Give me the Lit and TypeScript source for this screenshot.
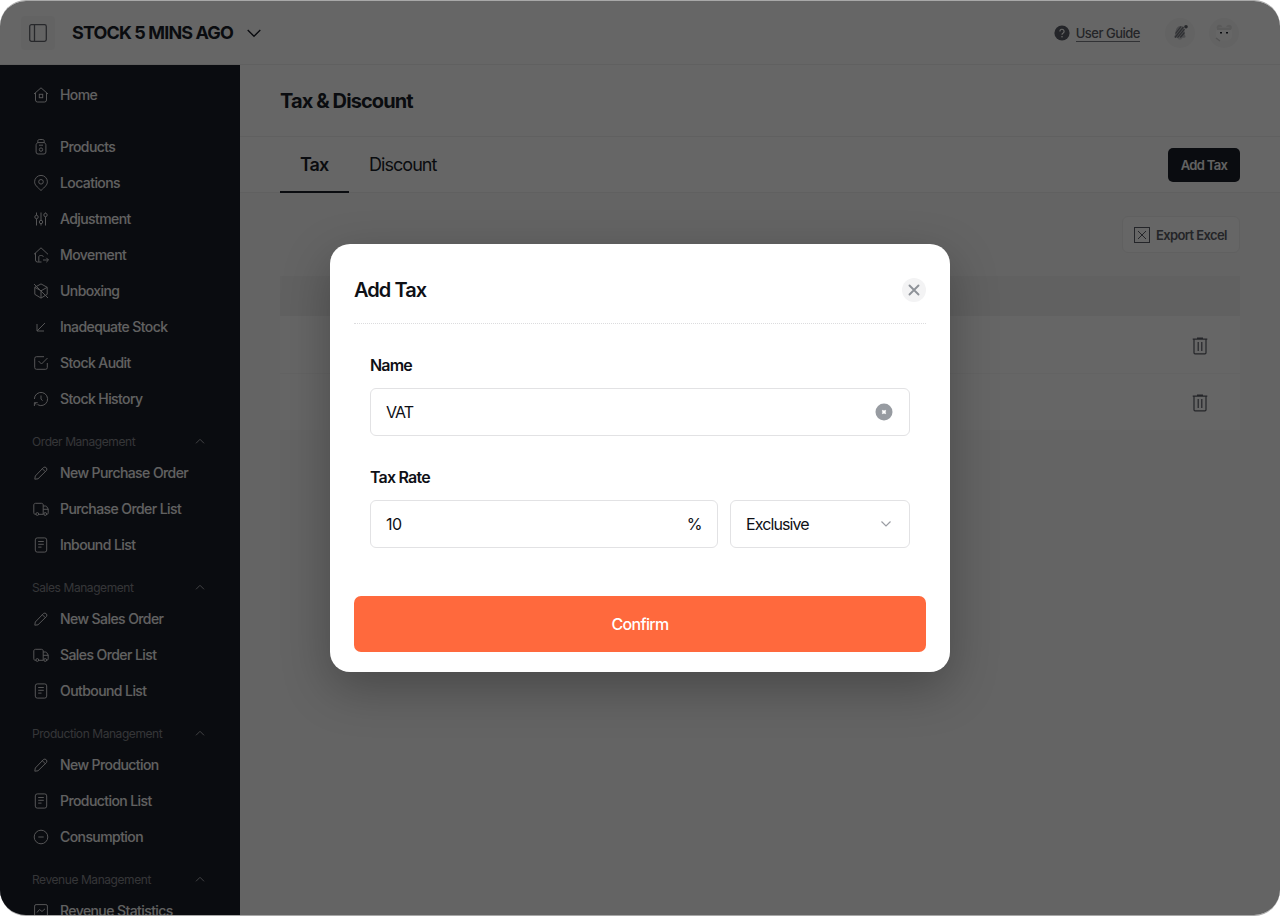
/**
 * Stock management shell with the "Add Tax" dialog open
 */
import { LitElement, html, css, svg } from 'lit'
import { customElement, property, state } from 'lit/decorators.js'

const icons = {
  home: svg`<path d="M2 8 9 1.800 16 8M3.500 7v7a2 2 0 0 0 2 2h7a2 2 0 0 0 2-2V7"/><rect x="7.300" y="8.300" width="3.400" height="3.400"/>`,
  product: svg`<path d="M5.800 4.600V3.200c0-1 .5-1.700 1.500-1.700h3.400c1 0 1.500.7 1.500 1.700v1.400M5.800 4.600h6.400M5.800 4.600C4.600 5.200 4.100 6 4.100 7.200v6.800a2 2 0 0 0 2 2h5.800a2 2 0 0 0 2-2V7.200c0-1.200-.5-2-1.700-2.600M7 7.200h4"/><circle cx="9" cy="11.600" r="1.700"/>`,
  pin: svg`<path d="M9 16.500C5 12.800 2.600 10.800 2.600 7.800a6.400 6.400 0 0 1 12.800 0c0 3-2.400 5-6.400 8.700z"/><circle cx="9" cy="7.800" r="2.300"/>`,
  sliders: svg`<path d="M4.500 2.500v2.700M4.500 8.800v6.700M9 2.500v7.700M9 13.800v1.700M13.500 2.500v.7M13.500 6.800v8.700"/><circle cx="4.500" cy="7" r="1.700"/><circle cx="9" cy="12" r="1.700"/><circle cx="13.500" cy="5" r="1.700"/>`,
  move: svg`<path d="M2 8.300 9 1.800l7 6.500M3.500 7v7a2 2 0 0 0 2 2h4M6.800 15.800V11c0-1 .5-1.500 1.500-1.500h1.400c1 0 1.500.5 1.500 1.500M11 14h5.300M14.300 11.800l2.200 2.200-2.200 2.200"/>`,
  unbox: svg`<path d="M9 1.900 15.200 5.300v7L9 16.100l-6.200-3.800v-7zM2.800 5.300 9 8.800l6.200-3.500M9 8.800v7.300M2 2l14 14"/>`,
  arrow: svg`<path d="M13 5 5 13M5 6v7h7"/>`,
  audit: svg`<path d="M12 2.700H4.500A1.800 1.800 0 0 0 2.700 4.500v9a1.800 1.800 0 0 0 1.800 1.800h9a1.800 1.800 0 0 0 1.800-1.800V9M6.500 7l3 3 6-6"/>`,
  history: svg`<path d="M2.400 9A6.600 6.600 0 1 1 5.500 14.600M2.400 16v-3.300h3.300M2.700 13l1.600 1.500M9 5.500V9l1.500 1.700"/>`,
  pencil: svg`<path d="M2.800 15.200l.5-3.200 8.300-8.600a2.200 2.200 0 0 1 3 3L6 14.800zM10.300 4.700l3 3"/>`,
  truck: svg`<path d="M4 14.300H3.300c-.9 0-1.500-.6-1.500-1.500V5c0-1 .7-1.700 1.700-1.700h6c1 0 1.700.7 1.700 1.700v9.300H6.800M11.200 6h2.300c.7 0 1.100.3 1.400.9L16.200 9v3.800c0 .9-.5 1.500-1.400 1.500M11.200 9.300h5"/><circle cx="5.300" cy="14" r="1.400"/><circle cx="13.200" cy="14" r="1.400"/>`,
  list: svg`<rect x="3.300" y="1.900" width="11.400" height="14.200" rx="2"/><path d="M6.200 5.500h5.600M6.200 8.300h5.600M6.200 11.100h3.300"/>`,
  minus: svg`<circle cx="9" cy="9" r="6.800"/><path d="M6.300 9h5.400"/>`,
  chart: svg`<rect x="2.600" y="2.600" width="12.800" height="12.800" rx="1.500"/><path d="M5 10.500 7.500 7.500l2.500 2 3-2.700"/>`
}

type IconName = keyof typeof icons

interface NavItem {
  icon: IconName
  label: string
}

interface NavSection {
  title: string
  items: NavItem[]
}

const mainItems: NavItem[] = [
  { icon: 'product', label: 'Products' },
  { icon: 'pin', label: 'Locations' },
  { icon: 'sliders', label: 'Adjustment' },
  { icon: 'move', label: 'Movement' },
  { icon: 'unbox', label: 'Unboxing' },
  { icon: 'arrow', label: 'Inadequate Stock' },
  { icon: 'audit', label: 'Stock Audit' },
  { icon: 'history', label: 'Stock History' }
]

const sections: NavSection[] = [
  {
    title: 'Order Management',
    items: [
      { icon: 'pencil', label: 'New Purchase Order' },
      { icon: 'truck', label: 'Purchase Order List' },
      { icon: 'list', label: 'Inbound List' }
    ]
  },
  {
    title: 'Sales Management',
    items: [
      { icon: 'pencil', label: 'New Sales Order' },
      { icon: 'truck', label: 'Sales Order List' },
      { icon: 'list', label: 'Outbound List' }
    ]
  },
  {
    title: 'Production Management',
    items: [
      { icon: 'pencil', label: 'New Production' },
      { icon: 'list', label: 'Production List' },
      { icon: 'minus', label: 'Consumption' }
    ]
  },
  {
    title: 'Revenue Management',
    items: [{ icon: 'chart', label: 'Revenue Statistics' }]
  }
]

@customElement('side-nav')
export class SideNav extends LitElement {
  static styles = css`
    :host {
      display: block;
      width: 240px;
      box-sizing: border-box;
      padding-top: 12px;
      background: #1b1e28;
      overflow: hidden;
    }

    .item {
      display: flex;
      align-items: center;
      gap: 10px;
      height: 36px;
      padding-left: 32px;
      font-size: 14px;
      font-weight: 500;
      letter-spacing: -0.58px;
      color: #f2f2f2;
      white-space: nowrap;
    }

    .item span {
      padding-bottom: 2px;
    }

    .home {
      margin-bottom: 16px;
    }

    .item svg {
      width: 18px;
      height: 18px;
      fill: none;
      stroke: #d4d5d8;
      stroke-width: 1;
    }

    .section {
      display: flex;
      align-items: center;
      justify-content: space-between;
      height: 28px;
      margin-top: 10px;
      padding: 0 34px 0 32px;
      font-size: 12px;
      letter-spacing: -0.43px;
      color: #85878d;
    }

    .section svg {
      width: 12px;
      height: 12px;
      fill: none;
      stroke: #a4a6ab;
    }
  `

  private renderItem(item: NavItem, extra = '') {
    return html`
      <div class="item ${extra}">
        <svg viewBox="0 0 18 18">${icons[item.icon]}</svg>
        <span>${item.label}</span>
      </div>
    `
  }

  render() {
    return html`
      ${this.renderItem({ icon: 'home', label: 'Home' }, 'home')}
      ${mainItems.map(item => this.renderItem(item))}
      ${sections.map(section => html`
        <div class="section">
          <span>${section.title}</span>
          <svg viewBox="0 0 12 12"><path d="M2 8.300 6 4.300l4 4"/></svg>
        </div>
        ${section.items.map(item => this.renderItem(item))}
      `)}
    `
  }
}

@customElement('top-bar')
export class TopBar extends LitElement {
  static styles = css`
    :host {
      display: flex;
      align-items: center;
      height: 64px;
      box-sizing: border-box;
      padding: 0 41px 0 21px;
      border-bottom: 1px solid #f1f1f1;
      background: #fff;
    }

    svg {
      display: block;
      fill: none;
    }

    .toggle {
      display: flex;
      align-items: center;
      justify-content: center;
      width: 34px;
      height: 34px;
      border-radius: 4px;
      background: #f8f8f8;
    }

    .store {
      margin-left: 17px;
      font-size: 18px;
      font-weight: 700;
      letter-spacing: -0.88px;
      color: #1b1e28;
    }

    .caret {
      margin-left: 13px;
    }

    .guide {
      display: flex;
      align-items: center;
      gap: 6px;
      margin-left: auto;
      font-size: 13px;
      font-weight: 500;
      letter-spacing: -0.5px;
      color: #5b5d66;
    }

    .guide span {
      padding-top: 2px;
      line-height: 16px;
      border-bottom: 1px solid #7c7e86;
    }

    .round {
      margin-left: 14px;
    }

    .bell {
      margin-left: 25px;
    }
  `

  render() {
    return html`
      <div class="toggle">
        <svg width="18" height="18" viewBox="0 0 18 18" stroke="#62646c" stroke-width="1.300">
          <rect x=".7" y=".7" width="16.600" height="16.600" rx="1.800"/>
          <path d="M5.500 1v16"/>
        </svg>
      </div>
      <div class="store">STOCK 5 MINS AGO</div>
      <svg class="caret" width="16" height="16" viewBox="0 0 16 16" stroke="#1b1e28" stroke-width="1.400">
        <path d="M1.700 5 8 11.200 14.300 5"/>
      </svg>
      <div class="guide">
        <svg width="16" height="16" viewBox="0 0 16 16">
          <circle cx="8" cy="8" r="7.600" fill="#5b5d66"/>
          <path d="M5.900 6.400a2.100 2.100 0 1 1 3.300 1.700C8.400 8.600 8 8.900 8 9.700" stroke="#fff" stroke-width="1.200"/>
          <circle cx="8" cy="11.700" r=".8" fill="#fff"/>
        </svg>
        <span>User Guide</span>
      </div>
      <svg class="bell" width="30" height="30" viewBox="0 0 30 30">
        <circle cx="15" cy="15" r="15" fill="#f7f7f7"/>
        <path d="M9.500 18c1.200-1.800.7-3.500 1.300-5.800.7-2.700 2.400-4.300 4.700-4.300 2.700 0 4.200 2 4 4.700-.1 2.400-.2 3.400.8 5.100.5 1.200.1 2-1 2h-8.800c-1.200 0-1.600-.8-1-1.700z" fill="#bdbec2"/>
        <path d="m10 19.500 8.500-10.500M12.500 19.700l7-8.500M15.300 19.500l4.200-5M10.500 15.500l5.500-7" stroke="#74767e" stroke-width="1.200"/>
        <path d="M12.500 20h4.800c-.6 2.200-4.200 2.200-4.800 0z" fill="#cfcfd2"/>
        <circle cx="21" cy="8.800" r="1.800" fill="#62646c"/>
      </svg>
      <svg class="round" width="30" height="30" viewBox="0 0 30 30">
        <circle cx="15" cy="15" r="15" fill="#f7f7f7"/>
        <circle cx="10.500" cy="9.500" r="2.800" fill="#e2e2e2"/>
        <circle cx="20" cy="9.500" r="2.800" fill="#e2e2e2"/>
        <rect x="7" y="9" width="16" height="13.500" rx="5" fill="#fff"/>
        <path d="M8 9.500h14v2.500H8z" fill="#e2e2e2"/>
        <path d="m7 20 4 3" stroke="#d0d0d0" stroke-width="1.500"/>
        <rect x="11" y="14" width="2" height="1.500" fill="#1b1e28"/>
        <rect x="17" y="14" width="2" height="1.500" fill="#1b1e28"/>
      </svg>
    `
  }
}

@customElement('tax-page')
export class TaxPage extends LitElement {
  static styles = css`
    :host {
      display: flex;
      flex-direction: column;
      flex: 1;
      background: #fbfbfb;
      color: #1b1e28;
    }

    h1 {
      display: flex;
      align-items: center;
      height: 72px;
      box-sizing: border-box;
      margin: 0;
      padding-left: 40px;
      border-bottom: 1px solid #f1f1f1;
      background: #fff;
      font-size: 20px;
      font-weight: 700;
      letter-spacing: -0.9px;
    }

    .tabs {
      display: flex;
      align-items: center;
      height: 56px;
      box-sizing: border-box;
      padding: 0 40px;
      border-bottom: 1px solid #efefef;
      background: #fff;
      font-size: 18px;
      letter-spacing: -0.95px;
    }

    .tab {
      height: 56px;
      line-height: 55px;
      box-sizing: border-box;
      padding: 0 20px;
    }

    .tab.active {
      width: 69px;
      border-bottom: 2px solid #1b1e28;
      font-weight: 600;
    }

    .add {
      display: flex;
      align-items: center;
      justify-content: center;
      width: 72px;
      height: 34px;
      margin-left: auto;
      border-radius: 5px;
      background: #1b1e28;
      font-size: 13px;
      font-weight: 600;
      letter-spacing: -0.65px;
      color: #f4f4f4;
    }

    .content {
      display: flex;
      flex-direction: column;
      padding: 23px 40px;
    }

    .export {
      display: flex;
      align-items: center;
      align-self: flex-end;
      gap: 6px;
      width: 118px;
      height: 37px;
      box-sizing: border-box;
      padding-left: 11px;
      border: 1px solid #f0f0f0;
      border-radius: 6px;
      background: #fff;
      font-size: 13px;
      font-weight: 600;
      letter-spacing: -0.62px;
      color: #5b5d66;
      white-space: nowrap;
    }

    .head {
      height: 40px;
      margin-top: 23px;
      background: #f2f2f2;
    }

    .row {
      display: flex;
      align-items: center;
      justify-content: flex-end;
      height: 57px;
      box-sizing: border-box;
      padding: 2px 32px 0 0;
      background: #fff;
    }

    .row + .row {
      border-top: 1px solid #f7f7f7;
    }

    svg {
      display: block;
      fill: none;
      stroke: #5b5d66;
    }
  `

  private rows = [1, 2]

  render() {
    return html`
      <h1>Tax &amp; Discount</h1>
      <div class="tabs">
        <div class="tab active">Tax</div>
        <div class="tab">Discount</div>
        <div class="add">Add Tax</div>
      </div>
      <div class="content">
        <div class="export">
          <svg width="16" height="16" viewBox="0 0 16 16">
            <rect x=".5" y=".5" width="15" height="15"/>
            <path d="m4 4 8 8M12 4l-8 8"/>
          </svg>
          Export Excel
        </div>
        <div class="head"></div>
        ${this.rows.map(() => html`
          <div class="row">
            <svg width="16" height="18" viewBox="0 0 16 18" stroke-width="1.200">
              <path d="M.7 2.200h14.600M5 1.200h6M2 2.500v13.300c0 .6.400 1 1 1h10c.6 0 1-.4 1-1V2.500M6.200 5v9M9.800 5v9"/>
            </svg>
          </div>
        `)}
      </div>
    `
  }
}

@customElement('tax-dialog')
export class TaxDialog extends LitElement {
  static styles = css`
    :host {
      display: block;
      width: 620px;
      height: 428px;
      box-sizing: border-box;
      padding: 0 24px;
      border-radius: 20px;
      background: #fff;
      box-shadow: 0 16px 48px rgba(0, 0, 0, 0.28);
      color: #0e1016;
    }

    svg {
      display: block;
      fill: none;
    }

    header {
      display: flex;
      align-items: center;
      justify-content: space-between;
      height: 80px;
      box-sizing: border-box;
      padding-top: 12px;
      border-bottom: 1px dotted #dcdcde;
      font-size: 20px;
      font-weight: 600;
      letter-spacing: -0.95px;
    }

    .fields {
      padding: 28px 16px 0;
    }

    label {
      display: block;
      height: 26px;
      line-height: 26px;
      margin-bottom: 10px;
      font-size: 16px;
      font-weight: 600;
      letter-spacing: -0.8px;
    }

    .box {
      display: flex;
      align-items: center;
      justify-content: space-between;
      height: 48px;
      box-sizing: border-box;
      padding: 0 15px;
      border: 1px solid #e2e2e4;
      border-radius: 6px;
      font-size: 16px;
      letter-spacing: -0.9px;
    }

    .amount {
      letter-spacing: -0.5px;
    }

    .name {
      margin-bottom: 28px;
    }

    .rate {
      display: grid;
      grid-template-columns: 348px 180px;
      gap: 12px;
    }

    .confirm {
      display: flex;
      align-items: center;
      justify-content: center;
      height: 56px;
      margin-top: 48px;
      border-radius: 7px;
      background: #ff693d;
      font-size: 16px;
      font-weight: 500;
      letter-spacing: -0.7px;
      color: #fff;
    }
  `

  @property({ type: String }) name = ''
  @property({ type: String }) rate = ''
  @property({ type: String }) mode = ''

  render() {
    return html`
      <header>
        <span>Add Tax</span>
        <svg width="24" height="24" viewBox="0 0 24 24">
          <circle cx="12" cy="12" r="12" fill="#f3f3f4"/>
          <path d="m7.500 7.500 9 9M16.500 7.500l-9 9" stroke="#8e9298" stroke-width="1.900" stroke-linecap="round"/>
        </svg>
      </header>
      <div class="fields">
        <label>Name</label>
        <div class="box name">
          <span>${this.name}</span>
          <svg width="20" height="20" viewBox="0 0 20 20">
            <circle cx="10" cy="10" r="8.500" fill="#979ba1"/>
            <path d="m8.300 8.300 3.400 3.400M11.700 8.300l-3.400 3.400" stroke="#fff" stroke-width="1.700"/>
          </svg>
        </div>
        <label>Tax Rate</label>
        <div class="rate">
          <div class="box amount"><span>${this.rate}</span><span>%</span></div>
          <div class="box">
            <span>${this.mode}</span>
            <svg width="16" height="16" viewBox="0 0 16 16" stroke="#9a9ca3" stroke-width="1.200">
              <path d="m3.500 5.500 4.500 4.500 4.500-4.500"/>
            </svg>
          </div>
        </div>
      </div>
      <div class="confirm">Confirm</div>
    `
  }
}

@customElement('app-root')
export class AppRoot extends LitElement {
  static styles = css`
    :host {
      display: block;
      height: 916px;
      background: #fff;
      font-family: Inter, 'Liberation Sans', sans-serif;
    }

    .window {
      position: relative;
      display: flex;
      flex-direction: column;
      height: 916px;
      box-sizing: border-box;
      border-top: 1px solid #a8a8a8;
      border-bottom: 1px solid #a8a8a8;
      border-radius: 26px;
      overflow: hidden;
    }

    .main {
      display: flex;
      flex: 1;
      min-height: 0;
    }

    .scrim {
      position: absolute;
      inset: 0;
      display: flex;
      align-items: center;
      justify-content: center;
      background: rgba(0, 0, 0, 0.6);
    }
  `

  @state() private open = true

  render() {
    return html`
      <div class="window">
        <top-bar></top-bar>
        <div class="main">
          <side-nav></side-nav>
          <tax-page></tax-page>
        </div>
        ${this.open ? html`
          <div class="scrim">
            <tax-dialog name="VAT" rate="10" mode="Exclusive"></tax-dialog>
          </div>
        ` : ''}
      </div>
    `
  }
}

declare global {
  interface HTMLElementTagNameMap {
    'app-root': AppRoot
    'side-nav': SideNav
    'top-bar': TopBar
    'tax-page': TaxPage
    'tax-dialog': TaxDialog
  }
}
